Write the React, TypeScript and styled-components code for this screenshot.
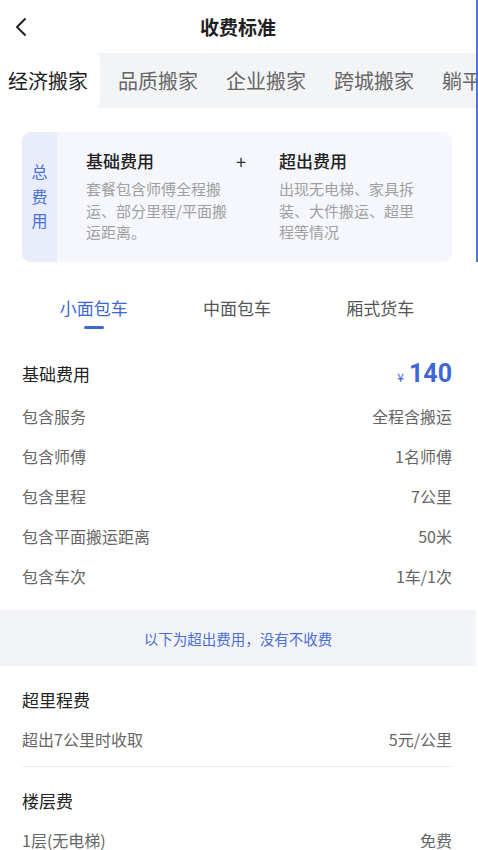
import React, { useState } from "react";
import styled, { createGlobalStyle } from "styled-components";

const Global = createGlobalStyle`
  html, body { margin: 0; padding: 0; background: #fff; }
  body { font-family: "Noto Sans CJK SC", "Noto Sans", sans-serif; -webkit-font-smoothing: antialiased; }
  * { box-sizing: border-box; }
`;

const Page = styled.div`
  position: relative;
  width: 478px;
  min-height: 850px;
  overflow: hidden;
  background: #fff;
`;

const Main = styled.div`
  width: 476px;
`;

const ScrollBar = styled.div`
  position: absolute;
  top: 0;
  right: 0;
  width: 2px;
  height: 262px;
  background: #4f74d8;
`;

const Header = styled.div`
  height: 53px;
  display: flex;
  align-items: center;
  justify-content: center;
  position: relative;
`;

const BackBtn = styled.div`
  position: absolute;
  left: 14px;
  top: 17px;
  width: 14px;
  height: 20px;
  display: flex;
`;

const Title = styled.div`
  font-size: 19px;
  font-weight: 700;
  color: #1f1f1f;
`;

const TabBar = styled.div`
  height: 55px;
  background: #f3f4f6;
  display: flex;
  align-items: stretch;
  overflow: hidden;
  white-space: nowrap;
`;

const Tab = styled.div<{ $active?: boolean; $first?: boolean }>`
  flex: none;
  display: flex;
  align-items: center;
  padding-left: ${(p) => (p.$first ? "8px" : "14px")};
  padding-right: ${(p) => (p.$first ? "12px" : "14px")};
  margin-right: ${(p) => (p.$first ? "4px" : "0")};
  font-size: 20px;
  color: ${(p) => (p.$active ? "#222" : "#666")};
  background: ${(p) => (p.$active ? "#fff" : "transparent")};
  border-radius: ${(p) => (p.$active ? "0 6px 6px 0" : "0")};
`;

const Body = styled.div`
  padding: 0 24px 0 22px;
`;

const Card = styled.div`
  margin-top: 24px;
  height: 130px;
  display: flex;
  background: #f5f7fd;
  border-radius: 9px;
  overflow: hidden;
`;

const CardSide = styled.div`
  width: 35px;
  background: #e9edfb;
  display: flex;
  flex-direction: column;
  align-items: center;
  justify-content: center;
  font-size: 16px;
  line-height: 24.5px;
  color: #4a6fd6;
  padding-bottom: 2px;
`;

const CardContent = styled.div`
  flex: 1;
  display: flex;
  padding: 16px 0 0 29px;
`;

const CardCol = styled.div`
  width: 142px;
  display: flex;
  flex-direction: column;
`;

const CardHead = styled.div`
  font-size: 17px;
  font-weight: 500;
  color: #222;
  line-height: 26px;
`;

const CardDesc = styled.div`
  margin-top: 4px;
  font-size: 15px;
  line-height: 21.5px;
  color: #a0a0a0;
`;

const Plus = styled.div`
  width: 51px;
  padding-left: 8px;
  font-size: 18px;
  line-height: 26px;
  color: #333;
`;

const VehicleTabs = styled.div`
  margin-top: 28px;
  display: grid;
  grid-template-columns: repeat(3, 1fr);
`;

const VTab = styled.div<{ $active?: boolean }>`
  display: flex;
  flex-direction: column;
  align-items: center;
  font-size: 17px;
  line-height: 36px;
  color: ${(p) => (p.$active ? "#3d66d6" : "#555")};
  cursor: pointer;
`;

const Underline = styled.div<{ $show?: boolean }>`
  width: 20px;
  height: 3px;
  border-radius: 2px;
  background: ${(p) => (p.$show ? "#3d66d6" : "transparent")};
`;

const Row = styled.div<{ $h?: number }>`
  height: ${(p) => p.$h ?? 40}px;
  display: flex;
  align-items: center;
  justify-content: space-between;
`;

const Label = styled.span<{ $strong?: boolean }>`
  font-size: ${(p) => (p.$strong ? "17px" : "16px")};
  color: ${(p) => (p.$strong ? "#222" : "#666")};
`;

const Value = styled.span`
  font-size: 16px;
  color: #666;
`;

const Price = styled.span`
  display: flex;
  align-items: baseline;
  color: #3d66d6;
`;

const Yen = styled.span`
  font-size: 12px;
  margin-right: 5px;
`;

const Amount = styled.span`
  font-family: "Roboto", "Liberation Sans", sans-serif;
  font-size: 25px;
  font-weight: 700;
`;

const BaseRows = styled.div`
  margin-top: 22px;
`;

const Band = styled.div`
  margin-top: 14px;
  height: 56px;
  background: #f3f4f7;
  display: flex;
  align-items: center;
  justify-content: center;
  font-size: 14.5px;
  color: #4a6fd6;
`;

const Section = styled.div<{ $divider?: boolean }>`
  padding: ${(p) => (p.$divider ? "13px 0 7px" : "13px 0 0")};
  border-bottom: ${(p) => (p.$divider ? "1px solid #eeeeee" : "none")};
`;

const vehicles = ["小面包车", "中面包车", "厢式货车"];
const tabs = ["经济搬家", "品质搬家", "企业搬家", "跨城搬家", "躺平搬家"];
const baseItems: [string, string][] = [
  ["包含服务", "全程含搬运"],
  ["包含师傅", "1名师傅"],
  ["包含里程", "7公里"],
  ["包含平面搬运距离", "50米"],
  ["包含车次", "1车/1次"],
];

export default function App() {
  const [vehicle, setVehicle] = useState(0);
  return (
    <Page>
      <Global />
      <Main>
        <Header>
          <BackBtn>
            <svg width="14" height="20" viewBox="0 0 14 20">
              <polyline points="11,2 3,10 11,18" fill="none" stroke="#222" strokeWidth="2" strokeLinecap="round" strokeLinejoin="round" />
            </svg>
          </BackBtn>
          <Title>收费标准</Title>
        </Header>
        <TabBar>
          {tabs.map((t, i) => (
            <Tab key={t} $active={i === 0} $first={i === 0}>
              {t}
            </Tab>
          ))}
        </TabBar>
        <Body>
          <Card>
            <CardSide>
              <span>总</span>
              <span>费</span>
              <span>用</span>
            </CardSide>
            <CardContent>
              <CardCol>
                <CardHead>基础费用</CardHead>
                <CardDesc>套餐包含师傅全程搬运、部分里程/平面搬运距离。</CardDesc>
              </CardCol>
              <Plus>+</Plus>
              <CardCol>
                <CardHead>超出费用</CardHead>
                <CardDesc>出现无电梯、家具拆装、大件搬运、超里程等情况</CardDesc>
              </CardCol>
            </CardContent>
          </Card>
          <VehicleTabs>
            {vehicles.map((v, i) => (
              <VTab key={v} $active={i === vehicle} onClick={() => setVehicle(i)}>
                {v}
                <Underline $show={i === vehicle} />
              </VTab>
            ))}
          </VehicleTabs>
          <BaseRows>
            <Row $h={45}>
              <Label $strong>基础费用</Label>
              <Price>
                <Yen>¥</Yen>
                <Amount>140</Amount>
              </Price>
            </Row>
            {baseItems.map(([l, v]) => (
              <Row key={l}>
                <Label>{l}</Label>
                <Value>{v}</Value>
              </Row>
            ))}
          </BaseRows>
        </Body>
        <Band>以下为超出费用，没有不收费</Band>
        <Body>
          <Section $divider>
            <Row>
              <Label $strong>超里程费</Label>
            </Row>
            <Row>
              <Label>超出7公里时收取</Label>
              <Value>5元/公里</Value>
            </Row>
          </Section>
          <Section>
            <Row>
              <Label $strong>楼层费</Label>
            </Row>
            <Row>
              <Label>1层(无电梯)</Label>
              <Value>免费</Value>
            </Row>
          </Section>
        </Body>
      </Main>
      <ScrollBar />
    </Page>
  );
}
